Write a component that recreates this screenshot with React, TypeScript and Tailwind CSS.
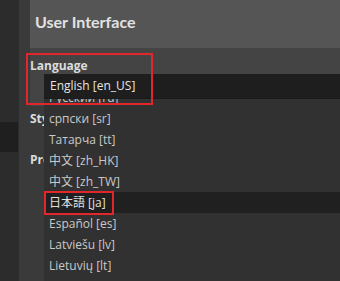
import React from 'react';

const languages = [
    'Русский [ru]',
    'српски [sr]',
    'Татарча [tt]',
    '中文 [zh_HK]',
    '中文 [zh_TW]',
    '日本語 [ja]',
    'Español [es]',
    'Latviešu [lv]',
    'Lietuvių [lt]',
    'Magyar [hu]',
];

export default function App() {
    return (
        <div className="relative flex w-[340px] h-[281px] overflow-hidden bg-[#3a3a3a] font-['Open_Sans','Noto_Sans_CJK_JP',sans-serif]">
            {/* sidebar */}
            <div className="w-[19px] shrink-0 bg-[#2c2c2c] flex flex-col">
                <div className="h-[122px]" />
                <div className="h-[30px] w-[18px] bg-[#1f1f1f]" />
            </div>

            {/* settings page */}
            <div className="flex-1 pl-[11px] flex flex-col">
                <div className="h-[48px] bg-[#555555] pt-[11px] pl-[5px] font-['Lato',sans-serif] text-[16px] leading-[22px] font-bold text-[#e2e2e2]">
                    User Interface
                </div>
                <div className="h-[58px] bg-[#444444] pt-[10px]">
                    <div className="text-[12px] leading-[16px] font-bold text-[#dcdcdc]">Language</div>
                </div>
                <div className="mt-[5px] text-[12px] leading-[16px] font-bold text-[#dcdcdc]">Style</div>
                <div className="mt-[25px] text-[12px] leading-[16px] font-bold text-[#dcdcdc]">Preview</div>
            </div>

            {/* open language dropdown */}
            <div className="absolute left-[44px] top-[74px] right-0 bottom-0 flex flex-col">
                <div className="h-[25px] shrink-0 bg-[#1e1e1e] flex items-center pl-[6px] text-[12px] text-[#e4e4e4] border-b border-[#1a1a1a]">
                    English [en_US]
                </div>
                <div className="flex-1 overflow-hidden bg-[#313131]">
                    <div className="mt-[-12px]">
                        {languages.map((lang) => (
                            <div
                                key={lang}
                                className={`h-[21px] flex items-center pl-[5px] text-[12px] text-[#c9c9c9] ${lang === '日本語 [ja]' ? 'bg-[#202020] text-[#e0e0e0]' : ''}`}
                            >
                                {lang}
                            </div>
                        ))}
                    </div>
                </div>
            </div>

            {/* highlight boxes */}
            <div className="absolute left-[26px] top-[53px] w-[127px] h-[52px] border-2 border-[#e3262c]" />
            <div className="absolute left-[44px] top-[191px] w-[70px] h-[24px] border-2 border-[#e3262c]" />
        </div>
    );
}
